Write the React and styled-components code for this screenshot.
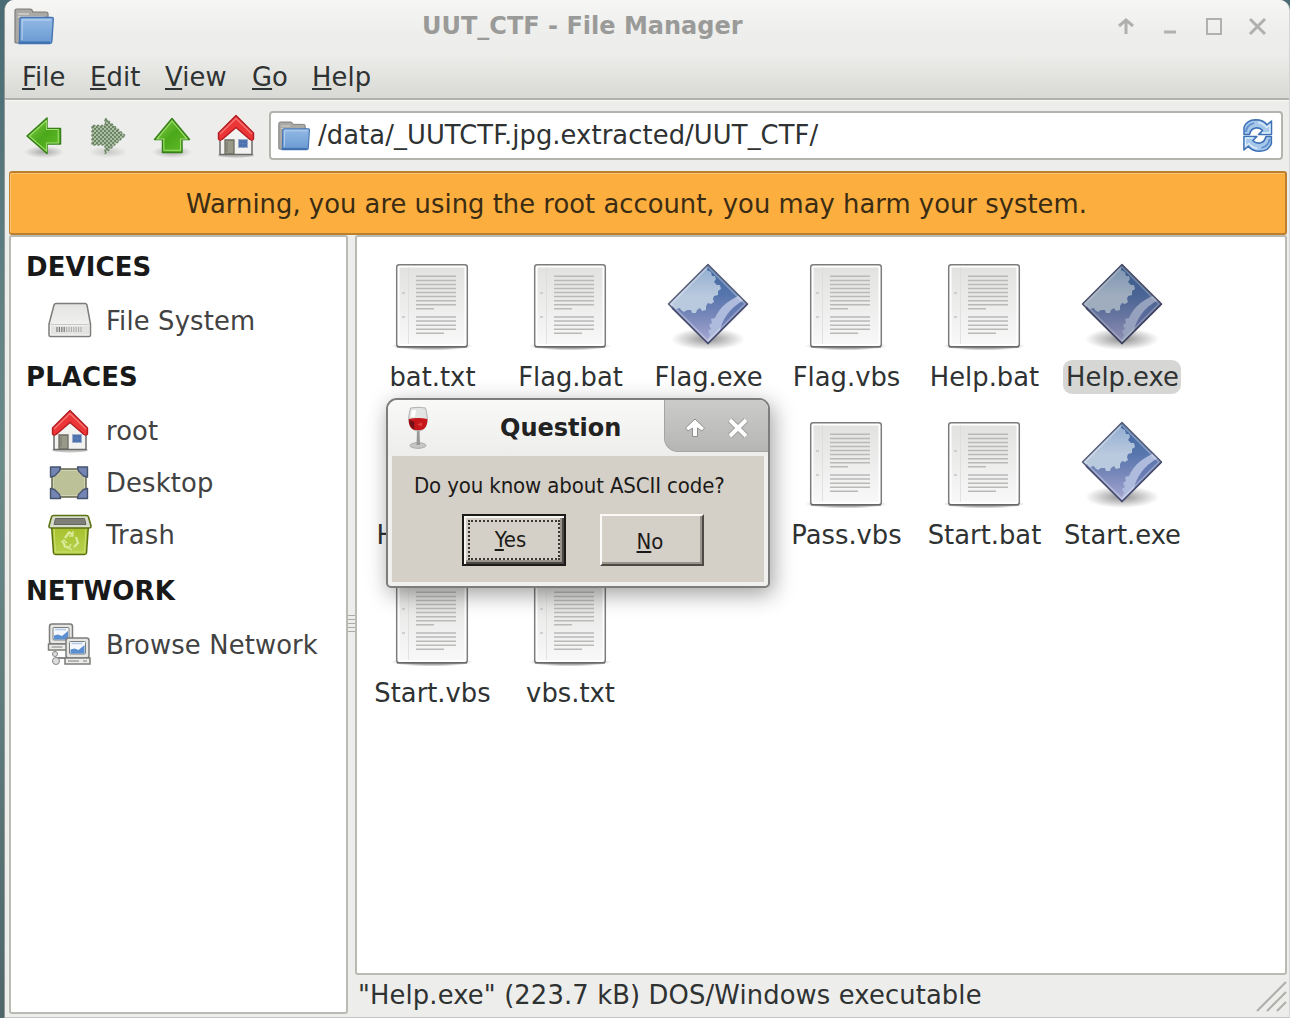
import React from "react";
import styled, { createGlobalStyle, css } from "styled-components";

const sans = `"DejaVu Sans", Verdana, sans-serif`;
const condensed = `"DejaVu Sans Condensed", "DejaVu Sans", Tahoma, sans-serif`;

const GlobalStyle = createGlobalStyle`
  * { box-sizing: border-box; }
  body { margin: 0; background: #54737a; overflow: hidden; }
  svg { display: block; flex: none; overflow: visible; }
`;

const Screen = styled.div`
  width: 1290px;
  height: 1018px;
  padding-left: 4px;
  background: linear-gradient(#4a6a74, #6c8c8a 45%, #4f6668);
  font-family: ${sans};
  font-size: 25.8px;
  line-height: 30px;
  color: #2f3232;
  overflow: hidden;
`;

const Window = styled.main`
  width: 1285px;
  height: 1018px;
  display: flex;
  flex-direction: column;
  background: #ededeb;
  border-left: 1px solid #8f9896;
  border-bottom: 1px solid #c2c2c0;
  border-radius: 10px 10px 0 0;
  box-shadow: 1px 0 0 #d4d6d4;
  overflow: hidden;
`;

const Header = styled.header`
  flex: none;
  height: 100px;
  background: linear-gradient(#f6f6f4 0, #eeeeec 32px, #ecedea 56px, #d9dad5 97px);
  border-bottom: 2px solid #b0b1ac;
`;

const TitleBar = styled.div`
  height: 52px;
  display: flex;
  align-items: center;
  padding: 0 20px 0 9px;
`;

const WindowTitle = styled.h1`
  flex: 1;
  margin: 0;
  padding-left: ${(p) => p.$shift}px;
  font-size: 24px;
  font-weight: bold;
  color: ${(p) => p.$color};
  white-space: nowrap;
`;

const MenuBar = styled.nav`
  height: 46px;
  padding: 4px 0 0 17px;
  display: grid;
  grid-template-columns: 68px 75px 87px 60px 80px;
  align-items: center;
  letter-spacing: 0.1px;
`;

const Mnemonic = styled.span`
  text-decoration: underline;
  text-decoration-thickness: 2px;
  text-underline-offset: 2px;
  text-decoration-skip-ink: none;
`;

const Toolbar = styled.div`
  flex: none;
  height: 71px;
  padding: 0 6px 0 7px;
  display: flex;
  align-items: center;
  border-top: 1px solid #f8f8f6;
`;

const ToolButton = styled.div`
  width: 64px;
  height: 48px;
  display: flex;
  align-items: center;
  justify-content: center;
`;

const LocationEntry = styled.div`
  flex: 1;
  height: 49px;
  margin-top: -1px;
  margin-left: 1px;
  padding: 0 8px 0 7px;
  display: flex;
  align-items: center;
  gap: 8px;
  background: #fff;
  border: 2px solid #b3b4ae;
  border-radius: 4px;
`;

const PathText = styled.span`
  flex: 1;
  padding-bottom: 2px;
  white-space: nowrap;
  letter-spacing: 0.08px;
`;

const Warning = styled.div`
  flex: none;
  height: 64px;
  margin: 0 2px 0 4px;
  padding: 1px 22px 0 0;
  display: flex;
  align-items: center;
  justify-content: center;
  background: #fcae3e;
  border: 2px solid #bb7f2e;
  border-left-width: 1px;
  box-shadow: inset 1px 1px 0 #fdc473;
  border-radius: 3px;
  color: #3a2c14;
  letter-spacing: 0.03px;
  white-space: nowrap;
`;

const Content = styled.div`
  flex: 1;
  min-height: 0;
  padding: 0 2px 0 4px;
  display: flex;
`;

const Sidebar = styled.aside`
  width: 339px;
  height: 779px;
  border: 2px solid #b9bab4;
  border-radius: 3px;
  background: #fff;
`;

const SectionTitle = styled.h2`
  height: 58px;
  margin: 0;
  padding: 2px 0 0 15px;
  display: flex;
  align-items: center;
  font-size: 26px;
  font-weight: bold;
  letter-spacing: 0.1px;
  color: #191919;
`;

const Place = styled.div`
  height: 52px;
  padding-left: 37px;
  display: flex;
  align-items: center;
  gap: 14px;
  letter-spacing: 0.15px;
  color: #424242;
  white-space: nowrap;
`;

const Splitter = styled.div`
  width: 7px;
  height: 777px;
  display: flex;
  flex-direction: column;
  justify-content: center;
  gap: 3px;
`;

const SplitterNotch = styled.i`
  height: 1px;
  background: #aaaba7;
`;

const MainColumn = styled.section`
  flex: 1;
  min-width: 0;
  display: flex;
  flex-direction: column;
`;

const FilePane = styled.div`
  height: 740px;
  padding: 19px 0 0 6px;
  border: 2px solid #b9bab4;
  border-radius: 3px;
  background: #fff;
  display: grid;
  grid-template-columns: repeat(6, 138px);
  grid-auto-rows: 158px;
  align-content: start;
`;

const FileCell = styled.div`
  display: flex;
  flex-direction: column;
  align-items: center;
  ${(p) =>
    p.$selected &&
    css`
      svg {
        filter: brightness(0.86);
      }
    `}
`;

const FileLabel = styled.span`
  height: 34px;
  margin-top: 8px;
  padding: 0 2px 0 3px;
  line-height: 35px;
  white-space: nowrap;
  border-radius: 9px;
  background: ${(p) => (p.$selected ? "#d6d6d4" : "transparent")};
`;

const StatusBar = styled.footer`
  flex: 1;
  padding: 0 1px 0 3px;
  display: flex;
  align-items: center;
  justify-content: space-between;
  letter-spacing: 0.13px;
  white-space: nowrap;
`;

const StatusText = styled.span`
  padding-bottom: 2px;
`;

const Dialog = styled.div`
  position: absolute;
  left: 386px;
  top: 398px;
  width: 384px;
  height: 190px;
  display: flex;
  flex-direction: column;
  background: #f0f0ee;
  border: 2px solid #7d7d7b;
  border-radius: 11px 11px 5px 5px;
  box-shadow: 3px 6px 22px rgba(0, 0, 0, 0.38);
  overflow: hidden;
`;

const DialogTitleBar = styled.div`
  flex: none;
  height: 56px;
  display: flex;
  padding-left: 17px;
  background: linear-gradient(#f9f9f8, #ededeb);
`;

const DialogTitle = styled(WindowTitle)`
  line-height: 57px;
`;

const DialogControls = styled.div`
  width: 104px;
  height: 52px;
  padding: 5px 18px 0 18px;
  display: flex;
  align-items: center;
  justify-content: space-between;
  background: linear-gradient(#cbcbca, #b6b6b5);
  border: solid #a4a4a2;
  border-width: 0 0 1px 1px;
  border-bottom-left-radius: 14px;
`;

const DialogBody = styled.div`
  height: 126px;
  margin: 0 4px;
  background: #d4d0c8;
  font-family: ${condensed};
  font-stretch: condensed;
  font-size: 22px;
  color: #1c1a18;
`;

const Message = styled.p`
  margin: 0;
  padding: 15px 0 13px 22px;
  letter-spacing: -0.13px;
  white-space: nowrap;
`;

const ButtonRow = styled.div`
  display: flex;
  gap: 34px;
  padding-left: 70px;
`;

const ClassicButton = styled.button`
  width: 104px;
  height: 52px;
  padding: 0 ${(p) => (p.$focused ? 7 : 4)}px 0 0;
  display: flex;
  align-items: center;
  justify-content: center;
  font: inherit;
  color: inherit;
  background: #d4d0c8;
  border: 2px solid;
  border-color: #fbfaf7 #4d4a46 #4d4a46 #fbfaf7;
  box-shadow: inset -2px -2px 0 #98948c;
  ${(p) =>
    p.$focused &&
    css`
      border-color: #1d1b19;
      box-shadow: inset 2px 2px 0 #f6f5f1, inset -2px -2px 0 #4a4744, inset -4px -4px 0 #98948c;
      outline: 2px dotted #3a3835;
      outline-offset: -8px;
    `}
`;

const ButtonText = styled.span`
  margin-top: ${(p) => p.$drop}px;
`;

const WineSlot = styled.div`
  width: 26px;
  padding-top: 6px;
`;

function FolderIcon({ width, height }) {
  return (
    <svg width={width} height={height} viewBox="0 0 40 37">
      <defs>
        <linearGradient id="folderFront" x1="0" y1="0" x2="0" y2="1">
          <stop offset="0" stopColor="#92b9e4" />
          <stop offset="1" stopColor="#6a9ad2" />
        </linearGradient>
      </defs>
      <path d="M1 34V3q0-2 2-2h13q2 0 3 3h13q2 0 2 2v26q0 3-3 3H3q-2 0-2-1z" fill="#aaa9a5" stroke="#7b7b78" strokeWidth="1.2" />
      <path d="M4 6h11M4 9h26" stroke="#d2d2cf" strokeWidth="1.3" />
      <path d="M6 11q0-1.500 1.500-1.500H38q1.500 0 1.300 1.500L37.800 34q-.2 1.500-2 1.500H4.500q1-.5 1-2z" fill="url(#folderFront)" stroke="#4674b2" strokeWidth="1.4" />
      <path d="M8 32l.3-20h28.500" fill="none" stroke="#bcd5f0" strokeWidth="1" />
      <path d="M6 34.300h30" stroke="#3f70b0" strokeWidth="1.800" />
    </svg>
  );
}

function GreenArrow({ direction }) {
  const shape = {
    left: "M5 24L25 6v10.500h13.500V32H25v9.500z",
    up: "M22 6.500L39.500 27.500H32V40.500H12.500V27.500H4.500z",
    right: "M39 23.500L19 6v7.500H6V33h13v8.500z",
  }[direction];
  const off = direction === "right";
  return (
    <svg width="44" height="48" viewBox="0 0 44 48">
      <defs>
        <radialGradient id="arrowShadow">
          <stop offset="0" stopColor="#555" stopOpacity=".45" />
          <stop offset="1" stopColor="#555" stopOpacity="0" />
        </radialGradient>
        <linearGradient id="arrowGreen" x1="0" y1="0" x2="1" y2="1">
          <stop offset="0" stopColor="#8bd44d" />
          <stop offset=".5" stopColor="#4ba81a" />
          <stop offset="1" stopColor="#66c02b" />
        </linearGradient>
        <pattern id="arrowDither" width="4" height="4" patternUnits="userSpaceOnUse">
          <rect width="4" height="4" fill="#a9bfa0" />
          <path d="M0 0h2v2H0zM2 2h2v2H2z" fill="#6f8567" />
        </pattern>
      </defs>
      <ellipse cx="22" cy="40" rx="20" ry="6" fill="url(#arrowShadow)" opacity={off ? 0.55 : 1} />
      <path d={shape} fill={off ? "url(#arrowDither)" : "url(#arrowGreen)"} stroke={off ? "#70876a" : "#36801a"} strokeWidth="1.500" strokeDasharray={off ? "2 2" : undefined} strokeLinejoin="round" />
      {!off && <path d={shape} fill="none" stroke="#a4df72" strokeWidth="1.200" transform="translate(3.1 3.400) scale(.86)" />}
    </svg>
  );
}

function HomeIcon() {
  return (
    <svg width="44" height="44" viewBox="0 0 44 44">
      <ellipse cx="22" cy="41" rx="18" ry="2.500" fill="#8d8d8b" opacity=".5" />
      <path d="M6 22L22 7l16 15v18.500H6z" fill="#f2f2f0" stroke="#6b6b69" strokeWidth="1.500" />
      <path d="M6.500 27L22 12l15.500 15v-5L22 7 6.500 22z" fill="#bfc0c0" />
      <path d="M11 40V26h9v14z" fill="#999989" stroke="#6c6c63" strokeWidth="1.300" />
      <path d="M13 38V28" stroke="#77776e" strokeWidth="1" />
      <rect x="24.500" y="25.500" width="9" height="8" fill="#4b71ae" stroke="#a0adca" strokeWidth="1" />
      <path d="M29 26v8M24.500 29.500h9" stroke="#6183ba" strokeWidth=".6" />
      <path d="M22 1.500L39.500 19v6q-1 2-3.500.5L22 13.500 8 25.500q-2.500 1.500-3.500-.5V19z" fill="#ec3537" stroke="#b31b20" strokeWidth="1.400" strokeLinejoin="round" />
      <path d="M6 20L22 4.500 38 20" fill="none" stroke="#f57574" strokeWidth="1.400" />
    </svg>
  );
}

function ReloadIcon() {
  const arrow = "M1 15.500V8.500Q3.500 1 12.500.8q8 0 11.500 5L28.500 2v13.500H15.500l4-4Q17 8.300 12.500 9 7.500 10 6.500 15.500z";
  return (
    <svg width="30" height="33" viewBox="0 0 30 33">
      <g fill="#a5c8ea" stroke="#3d6fb5" strokeWidth="1.500" strokeLinejoin="round">
        <path d={arrow} />
        <path d={arrow} transform="rotate(180 14.700 16.500)" />
      </g>
      <path d="M15 3.500q5 .5 8.500 5L27 6v8h-8M14.500 29.500q-5-.5-8.500-5L2.500 27v-8h8" fill="none" stroke="#dcebf8" strokeWidth="1.300" />
      <path d="M3 13q.5-7 8-9M26.500 20q-.5 7-8 9" fill="none" stroke="#5c8ccb" strokeWidth="1.800" />
    </svg>
  );
}

function DriveIcon() {
  const vents = Array.from({ length: 11 }, (_, i) => 9 + i * 2.4);
  return (
    <svg width="44" height="44" viewBox="0 0 44 44">
      <defs>
        <linearGradient id="driveTop" x1="0" y1="0" x2="0" y2="1">
          <stop offset="0" stopColor="#e3e3e1" />
          <stop offset="1" stopColor="#f8f8f7" />
        </linearGradient>
      </defs>
      <path d="M8 4.500h29q1.500 0 2 1.500l3.500 19v11q0 1.500-1.500 1.500H2.500Q1 37.500 1 36V25L6 6q.5-1.500 2-1.500z" fill="url(#driveTop)" stroke="#7c7c7a" strokeWidth="1.500" />
      <path d="M2.500 25.500h39" stroke="#c8c8c6" />
      <path d="M3 27h38v8.500H3z" fill="#e3e3e1" />
      {vents.map((x) => (
        <path key={x} d={`M${x} 28v5`} stroke={x < 18 ? "#777" : "#b0b0b0"} strokeWidth="1.200" />
      ))}
    </svg>
  );
}

function DesktopIcon() {
  return (
    <svg width="44" height="44" viewBox="0 0 44 44">
      <rect x="4" y="8" width="34" height="28" fill="#c5c8a0" stroke="#62664c" strokeWidth="1.500" />
      <path d="M13 9.500h16l7.500 7v11L29 34.500H13L5.500 27.500v-11z" fill="#bdc198" stroke="#d2d5b5" strokeWidth="1" />
      <g fill="#7485b4" stroke="#46536f" strokeWidth="1.400" strokeLinejoin="round">
        <path d="M2.500 6h10l-1 4-5 5-4 1z" />
        <path d="M39.500 6h-10l1 4 5 5 4 1z" />
        <path d="M2.500 37.500h10l-1-4-5-5-4-1z" />
        <path d="M39.500 37.500h-10l1-4 5-5 4-1z" />
      </g>
    </svg>
  );
}

function TrashIcon() {
  return (
    <svg width="44" height="44" viewBox="0 0 44 44">
      <defs>
        <linearGradient id="binGreen" x1="0" y1="0" x2="0" y2="1">
          <stop offset="0" stopColor="#a5bf29" />
          <stop offset="1" stopColor="#b9d350" />
        </linearGradient>
      </defs>
      <path d="M3.500 12h37l-2 28q-.2 1.500-2 1.500h-29q-1.800 0-2-1.500z" fill="url(#binGreen)" stroke="#5b7213" strokeWidth="1.500" />
      <path d="M6 15l1.500 24h29L38 15" fill="none" stroke="#cde06e" strokeWidth="1" />
      <path d="M5.500 2.500h33q1.500 0 2 1.500l2.500 9q.2 2-2 2H3q-2.200 0-2-2L3.500 4q.5-1.500 2-1.500z" fill="#d8dccd" stroke="#5b7213" strokeWidth="1.600" />
      <path d="M7.500 5.500h29l1.500 6H6z" fill="#7e8078" stroke="#64665f" strokeWidth="1" />
      <g fill="none" stroke="#dcea9c" strokeWidth="2.200">
        <path d="M17 25l4-5.500 4 2" />
        <path d="M28 24l2 6-4 4" />
        <path d="M22 35l-5-1.500-2-5" />
        <path d="M25 18v5h-4M23 31l-2 4 3 2M13 29l3-2 3 3" strokeWidth="1.300" />
      </g>
    </svg>
  );
}

function Computer({ x, y }) {
  return (
    <g transform={`translate(${x} ${y})`} stroke="#7c7c7a" strokeWidth="1.500">
      <rect x="1" y="1" width="23" height="20" rx="2.500" fill="#e6e6e4" />
      <rect x="4.500" y="4.500" width="16" height="12.500" rx="1" fill="#f4f8fc" strokeWidth="1" />
      <path d="M5.500 12.500l4-1 4 1.500 6-5v8.500h-14z" fill="#5a90d2" stroke="none" />
      <path d="M6.500 6.500h11" stroke="#b3cbe8" fill="none" />
      <path d="M0 21h25v6H0z" fill="#ececea" />
      <path d="M3 24h11M18 24h4" strokeWidth="1" />
    </g>
  );
}

function NetworkIcon() {
  return (
    <svg width="44" height="44" viewBox="0 0 44 44">
      <Computer x={0.5} y={0} />
      <path d="M7 28v5M8 35h10v4" fill="none" stroke="#888" strokeWidth="2" />
      <circle cx="7" cy="31" r="2.500" fill="#ddd" stroke="#888" />
      <circle cx="8" cy="38" r="3.500" fill="#ddd" stroke="#888" />
      <Computer x={17} y={14} />
    </svg>
  );
}

function TextFileIcon() {
  const full = [20.3, 24.4, 28.4, 32.5, 36.6, 40.6, 44.7, 48.8];
  const second = [61, 65.1, 69.2, 73.2];
  return (
    <svg width="96" height="96" viewBox="0 0 96 96">
      <defs>
        <linearGradient id="paper" x1="0" y1="0" x2="0" y2="1">
          <stop offset="0" stopColor="#e2e2e1" />
          <stop offset="1" stopColor="#f8f8f8" />
        </linearGradient>
        <radialGradient id="fileShadow">
          <stop offset=".6" stopColor="#333" stopOpacity=".4" />
          <stop offset="1" stopColor="#333" stopOpacity="0" />
        </radialGradient>
      </defs>
      <ellipse cx="48" cy="90" rx="41" ry="4.500" fill="url(#fileShadow)" />
      <rect x="12.700" y="8.700" width="70.600" height="82" rx="2.500" fill="#fff" stroke="#7c7c7c" strokeWidth="1.500" />
      <rect x="15.500" y="11.500" width="65" height="76.500" fill="url(#paper)" />
      <path d="M24.500 11v77" stroke="#dcdcdb" strokeWidth=".8" />
      <path d="M18 37h3M18 61h3" stroke="#c4c4c4" strokeWidth="1.500" />
      <g stroke="#b9b9b8" strokeWidth="1.500">
        {full.concat(second).map((y) => (
          <path key={y} d={`M32 ${y}h40`} />
        ))}
        <path d="M32 52.800h18M32 77.300h28" />
      </g>
      <path d="M13 90.700h70" stroke="#686868" strokeWidth="1.500" />
    </svg>
  );
}

function ExeIcon() {
  return (
    <svg width="96" height="96" viewBox="0 0 96 96">
      <defs>
        <clipPath id="diamond">
          <path d="M48 8l40 40-40 40L8 48z" />
        </clipPath>
        <linearGradient id="exeBase" x1="0" y1="0" x2="0" y2="1">
          <stop offset=".1" stopColor="#41689f" />
          <stop offset=".4" stopColor="#5575ad" />
          <stop offset=".62" stopColor="#7787b9" />
          <stop offset=".9" stopColor="#a7a8d2" />
        </linearGradient>
        <linearGradient id="exeGear" x1="0" y1="0" x2="0" y2="1">
          <stop offset=".1" stopColor="#8aa8cd" />
          <stop offset=".7" stopColor="#b9c9de" />
        </linearGradient>
        <linearGradient id="exeSmallGear" x1="0" y1="0" x2="0" y2="1">
          <stop offset="0" stopColor="#5975ae" />
          <stop offset="1" stopColor="#8488bd" />
        </linearGradient>
        <radialGradient id="exeShadow">
          <stop offset="0" stopColor="#222" stopOpacity=".5" />
          <stop offset="1" stopColor="#222" stopOpacity="0" />
        </radialGradient>
      </defs>
      <ellipse cx="48" cy="83" rx="37" ry="11" fill="url(#exeShadow)" />
      <g clipPath="url(#diamond)">
        <rect width="96" height="96" fill="url(#exeBase)" />
        <path
          d="M0 0h46l1 14 4 2 1 4 3 0 1 3-2 3 3 3 3 0 1 4-3 2 0 4-4 1-1 3 1 3-3 2-3-1-2 3 0 4-4 1-2-3-3 2-1 3-4 0-1-3-4 0-3 2-3-2-1-2-4 1-3-3-3 1-14-6z"
          fill="url(#exeGear)"
        />
        <path d="M100 34C76 37 60 49 55 62l-4 1 1 4-3 2 2 4-3 2 2 4-2 4v8H100z" fill="#aebbdd" />
        <path d="M100 39C78 43 61 57 58 84v12h42z" fill="url(#exeSmallGear)" />
      </g>
      <path d="M48 11l37 37-37 37L11 48z" fill="none" stroke="#fff" strokeOpacity=".32" strokeWidth="1.600" />
      <path d="M48 8.500L87.500 48 48 87.500 8.500 48z" fill="none" stroke="#5a5f78" strokeWidth="1.500" strokeLinejoin="round" />
      <path d="M12 52l36 35.500L87.500 48" fill="none" stroke="#474d72" strokeWidth="1.500" />
    </svg>
  );
}

function WindowControls() {
  return (
    <svg width="152" height="20" viewBox="0 0 152 20" fill="none" stroke="#b0b1ae" strokeWidth="3">
      <path d="M9 18V4M2 10l7-6 7 6" />
      <path d="M47 16h12" />
      <path d="M90 3h14v15H90z" strokeWidth="2" />
      <path d="M133 3l15 15M148 3l-15 15" />
    </svg>
  );
}

function RollUpIcon() {
  return (
    <svg width="22" height="22" viewBox="0 0 22 22">
      <path d="M12 2L2.500 11l2.500 3 4.500-3v8.500h5V11l4.500 3 2.500-3z" fill="#fff" stroke="#8f8f8e" strokeWidth="1" strokeLinejoin="round" />
    </svg>
  );
}

function CloseIcon() {
  return (
    <svg width="22" height="22" viewBox="0 0 22 22">
      <path d="M2 3l16 16M18 3L2 19" stroke="#969695" strokeWidth="6" />
      <path d="M2 3l16 16M18 3L2 19" stroke="#fff" strokeWidth="4" />
    </svg>
  );
}

function WineIcon() {
  return (
    <svg width="26" height="44" viewBox="0 0 26 44">
      <ellipse cx="13" cy="39.500" rx="8" ry="2.800" fill="#c6c6c4" stroke="#aaaaa8" />
      <path d="M12 24h2.500l.5 15h-3.500z" fill="#999897" />
      <path d="M5.500 2q7.500-1.500 15 0Q23.500 12 21.500 18q-2.500 7-8.500 7t-8.500-7Q2.500 12 5.500 2z" fill="#e2e4e3" stroke="#b0b2b1" />
      <path d="M3.700 13q9.300-2 18.700 0 .1 8-4.400 10.500-5 1.500-10 0-4.500-2.500-4.300-10.500z" fill="#c6161b" />
      <path d="M4 14q1 8 5.500 9.500-1-4.500 0-7.500z" fill="#6e1015" />
      <path d="M12 18.500l5-2v4z" fill="#e0403d" />
      <path d="M7 4h4l-1 7H6z" fill="#fff" />
    </svg>
  );
}

function ResizeGrip() {
  return (
    <svg width="32" height="32" viewBox="0 0 32 32" stroke="#b0b1ad" strokeWidth="2.200">
      <path d="M3 31L32 2M13 31L32 12M23 31L32 22" />
    </svg>
  );
}

const menus = ["File", "Edit", "View", "Go", "Help"];

const sections = [
  { title: "DEVICES", items: [["File System", DriveIcon]] },
  { title: "PLACES", items: [["root", HomeIcon], ["Desktop", DesktopIcon], ["Trash", TrashIcon]] },
  { title: "NETWORK", items: [["Browse Network", NetworkIcon]] },
];

const files = [
  "bat.txt", "Flag.bat", "Flag.exe", "Flag.vbs", "Help.bat", "Help.exe",
  "Help.vbs", null, null, "Pass.vbs", "Start.bat", "Start.exe",
  "Start.vbs", "vbs.txt",
];

const selectedFile = "Help.exe";

function Hotkey({ children }) {
  return (
    <span>
      <Mnemonic>{children[0]}</Mnemonic>
      {children.slice(1)}
    </span>
  );
}

function File({ name }) {
  const selected = name === selectedFile;
  return (
    <FileCell $selected={selected}>
      {name.endsWith(".exe") ? <ExeIcon /> : <TextFileIcon />}
      <FileLabel $selected={selected}>{name}</FileLabel>
    </FileCell>
  );
}

function QuestionDialog() {
  return (
    <Dialog role="dialog">
      <DialogTitleBar>
        <WineSlot>
          <WineIcon />
        </WineSlot>
        <DialogTitle as="h2" $shift={69} $color="#222">Question</DialogTitle>
        <DialogControls>
          <RollUpIcon />
          <CloseIcon />
        </DialogControls>
      </DialogTitleBar>
      <DialogBody>
        <Message>Do you know about ASCII code?</Message>
        <ButtonRow>
          <ClassicButton $focused>
            <ButtonText $drop={0}><Hotkey>Yes</Hotkey></ButtonText>
          </ClassicButton>
          <ClassicButton>
            <ButtonText $drop={4}><Hotkey>No</Hotkey></ButtonText>
          </ClassicButton>
        </ButtonRow>
      </DialogBody>
    </Dialog>
  );
}

export default function App() {
  return (
    <Screen>
      <GlobalStyle />
      <Window>
        <Header>
          <TitleBar>
            <FolderIcon width={40} height={37} />
            <WindowTitle $shift={368} $color="#9a9b99">UUT_CTF - File Manager</WindowTitle>
            <WindowControls />
          </TitleBar>
          <MenuBar>
            {menus.map((m) => (
              <Hotkey key={m}>{m}</Hotkey>
            ))}
          </MenuBar>
        </Header>
        <Toolbar>
          <ToolButton><GreenArrow direction="left" /></ToolButton>
          <ToolButton><GreenArrow direction="right" /></ToolButton>
          <ToolButton><GreenArrow direction="up" /></ToolButton>
          <ToolButton><HomeIcon /></ToolButton>
          <LocationEntry>
            <FolderIcon width={32} height={30} />
            <PathText>/data/_UUTCTF.jpg.extracted/UUT_CTF/</PathText>
            <ReloadIcon />
          </LocationEntry>
        </Toolbar>
        <Warning>Warning, you are using the root account, you may harm your system.</Warning>
        <Content>
          <Sidebar>
            {sections.map((s) => (
              <React.Fragment key={s.title}>
                <SectionTitle>{s.title}</SectionTitle>
                {s.items.map(([label, Icon]) => (
                  <Place key={label}>
                    <Icon />
                    {label}
                  </Place>
                ))}
              </React.Fragment>
            ))}
          </Sidebar>
          <Splitter>
            {[0, 1, 2, 3, 4].map((n) => (
              <SplitterNotch key={n} />
            ))}
          </Splitter>
          <MainColumn>
            <FilePane>
              {files.map((name, i) => (name ? <File key={name} name={name} /> : <FileCell key={i} />))}
            </FilePane>
            <StatusBar>
              <StatusText>"Help.exe" (223.7 kB) DOS/Windows executable</StatusText>
              <ResizeGrip />
            </StatusBar>
          </MainColumn>
        </Content>
      </Window>
      <QuestionDialog />
    </Screen>
  );
}
